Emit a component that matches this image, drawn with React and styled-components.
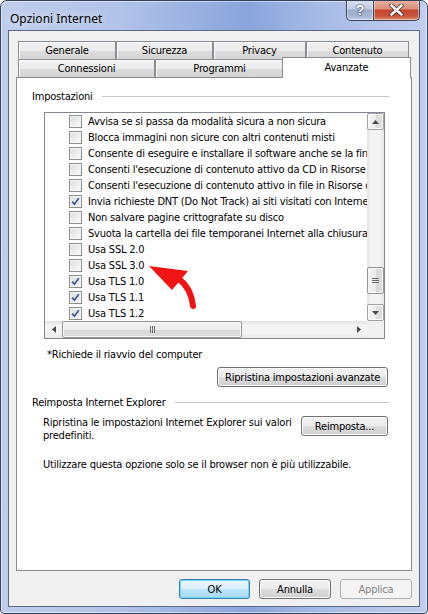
import React from 'react'
import styled, { createGlobalStyle } from 'styled-components'

const UI_FONT = `Tahoma, "DejaVu Sans Condensed", "Liberation Sans", sans-serif`

const GlobalStyle = createGlobalStyle`
  html, body {
    margin: 0;
    padding: 0;
    background: #fff;
  }
  body {
    font-family: ${UI_FONT};
    font-size: 11px;
    letter-spacing: -0.2px;
    color: #000;
  }
  * {
    box-sizing: border-box;
  }
`

const settings = [
  { label: 'Avvisa se si passa da modalità sicura a non sicura', checked: false },
  { label: 'Blocca immagini non sicure con altri contenuti misti', checked: false },
  { label: 'Consente di eseguire e installare il software anche se la firma non è valida', checked: false },
  { label: "Consenti l'esecuzione di contenuto attivo da CD in Risorse del computer*", checked: false },
  { label: "Consenti l'esecuzione di contenuto attivo in file in Risorse del computer*", checked: false },
  { label: 'Invia richieste DNT (Do Not Track) ai siti visitati con Internet Explorer', checked: true },
  { label: 'Non salvare pagine crittografate su disco', checked: false },
  { label: 'Svuota la cartella dei file temporanei Internet alla chiusura del browser', checked: false },
  { label: 'Usa SSL 2.0', checked: false },
  { label: 'Usa SSL 3.0', checked: false },
  { label: 'Usa TLS 1.0', checked: true },
  { label: 'Usa TLS 1.1', checked: true },
  { label: 'Usa TLS 1.2', checked: true },
]

const topTabs = [
  { label: 'Generale', width: 98 },
  { label: 'Sicurezza', width: 97 },
  { label: 'Privacy', width: 93 },
  { label: 'Contenuto', width: 103 },
]

const bottomTabs = [
  { label: 'Connessioni', width: 137 },
  { label: 'Programmi', width: 129 },
  { label: 'Avanzate', width: 129, selected: true },
]

const Arrow = ({ dir }) => {
  const shapes = {
    up: '0,4 7,4 3.5,0',
    down: '0,0 7,0 3.5,4',
    left: '4,0 4,7 0,3.5',
    right: '0,0 0,7 4,3.5',
  }
  const vertical = dir === 'up' || dir === 'down'
  return (
    <svg width={vertical ? 7 : 4} height={vertical ? 4 : 7}>
      <polygon points={shapes[dir]} fill="#4a4a4a" />
    </svg>
  )
}

const App = () => {
  const thumbTop = 137

  return (
    <>
      <GlobalStyle />
      <Window>
        <TitleBar>
          <Title>Opzioni Internet</Title>
          <CaptionGroup>
            <HelpButton>?</HelpButton>
            <CloseButton>
              <svg width="15" height="12" viewBox="0 0 15 12">
                <path d="M2.5 1.5 L12.5 10.5 M12.5 1.5 L2.5 10.5" stroke="#3a2a2a" strokeWidth="4.2" strokeLinecap="round" />
                <path d="M2.5 1.5 L12.5 10.5 M12.5 1.5 L2.5 10.5" stroke="#fff" strokeWidth="2.6" strokeLinecap="round" />
              </svg>
            </CloseButton>
          </CaptionGroup>
        </TitleBar>

        <Client>
          <TabRow>
            {topTabs.map((t) => (
              <Tab key={t.label} $width={t.width}>{t.label}</Tab>
            ))}
          </TabRow>
          <TabRow>
            {bottomTabs.map((t) =>
              t.selected ? (
                <SelectedTab key={t.label} $width={t.width}>{t.label}</SelectedTab>
              ) : (
                <Tab key={t.label} $width={t.width}>{t.label}</Tab>
              )
            )}
          </TabRow>

          <Panel>
            <GroupHeader>
              <span>Impostazioni</span>
              <GroupLine />
            </GroupHeader>

            <ListBox>
              <ListViewport>
                {settings.map((s) => (
                  <Item key={s.label}>
                    <Check>
                      {s.checked && (
                        <svg width="11" height="11" viewBox="0 0 11 11">
                          <path d="M2.2 5.6 L4.4 8.2 L8.8 2.2" fill="none" stroke="#3d5494" strokeWidth="1.7" />
                        </svg>
                      )}
                    </Check>
                    {s.label}
                  </Item>
                ))}
              </ListViewport>

              <VScroll>
                <ScrollButton $vertical><Arrow dir="up" /></ScrollButton>
                <VTrack>
                  <VThumb style={{ marginTop: thumbTop }}>
                    <svg width="7" height="7">
                      <path d="M0 1.5 H7 M0 3.5 H7 M0 5.5 H7" stroke="#6b6b6b" strokeWidth="1" />
                    </svg>
                  </VThumb>
                </VTrack>
                <ScrollButton $vertical><Arrow dir="down" /></ScrollButton>
              </VScroll>

              <HScroll>
                <GlyphButton><Arrow dir="left" /></GlyphButton>
                <HThumb>
                  <svg width="7" height="7">
                    <path d="M1.5 0 V7 M3.5 0 V7 M5.5 0 V7" stroke="#6b6b6b" strokeWidth="1" />
                  </svg>
                </HThumb>
                <HSpacer />
                <GlyphButton><Arrow dir="right" /></GlyphButton>
              </HScroll>
              <Corner />
            </ListBox>

            <Footnote>*Richiede il riavvio del computer</Footnote>

            <ActionRow>
              <Button $width={171}>Ripristina impostazioni avanzate</Button>
            </ActionRow>

            <GroupHeader $top={9}>
              <span>Reimposta Internet Explorer</span>
              <GroupLine />
            </GroupHeader>

            <ResetRow>
              <ResetText>
                Ripristina le impostazioni Internet Explorer sui valori
                <br />
                predefiniti.
              </ResetText>
              <Button $width={87}>Reimposta...</Button>
            </ResetRow>

            <Hint>Utilizzare questa opzione solo se il browser non è più utilizzabile.</Hint>
          </Panel>

          <DialogButtons>
            <Button $width={71} $default>OK</Button>
            <Button $width={72}>Annulla</Button>
            <Button $width={72} disabled>Applica</Button>
          </DialogButtons>
        </Client>

        <Pointer width="60" height="55" viewBox="0 0 60 55">
          <path d="M38 23 Q50 32 52 50" fill="none" stroke="#f01414" strokeWidth="6" strokeLinecap="round" />
          <polygon points="8,10 47,15 31,34" fill="#f01414" />
        </Pointer>
      </Window>
    </>
  )
}

const Window = styled.div`
  position: relative;
  width: 428px;
  height: 614px;
  display: flex;
  flex-direction: column;
  padding: 0 7px 6px 7px;
  border: 1px solid #34425e;
  border-radius: 7px 7px 4px 4px;
  background: linear-gradient(90deg, #bfcdec 0%, #b2c3e8 28%, #97aee0 48%, #8aa4dc 58%, #a9bce6 76%, #c0cdee 100%);
  box-shadow: inset 0 0 0 1px rgba(255, 255, 255, 0.5);
  overflow: hidden;
`

const TitleBar = styled.div`
  height: 29px;
  display: flex;
  justify-content: space-between;
  align-items: flex-start;
`

const Title = styled.div`
  font-family: "Noto Sans", "Liberation Sans", sans-serif;
  font-size: 12px;
  letter-spacing: 0;
  line-height: 15px;
  padding: 10px 0 0 2px;
  color: #000;
  text-shadow: 0 0 8px rgba(255, 255, 255, 0.9);
`

const CaptionGroup = styled.div`
  display: flex;
  margin-top: -1px;
`

const CaptionButton = styled.div`
  height: 21px;
  display: flex;
  align-items: center;
  justify-content: center;
  border: 1px solid #3a455c;
  border-top: none;
  box-shadow: inset 0 0 0 1px rgba(255, 255, 255, 0.45);
`

const HelpButton = styled(CaptionButton)`
  width: 27px;
  border-right: none;
  border-radius: 0 0 0 5px;
  background: linear-gradient(#dbe2f1 0%, #bfcbe3 45%, #9aabcc 50%, #a9b8d6 85%, #c6d2ea 100%);
  color: #fff;
  font-family: "Liberation Sans", sans-serif;
  font-weight: bold;
  font-size: 14px;
  text-shadow: 0 0 2px #2a3550, 0 0 1px #2a3550;
`

const CloseButton = styled(CaptionButton)`
  width: 47px;
  border-radius: 0 0 5px 0;
  background: linear-gradient(#eab3a4 0%, #dc8d77 45%, #c5442b 50%, #c9553a 80%, #e08a6e 100%);
`

const Client = styled.div`
  flex: 1;
  display: flex;
  flex-direction: column;
  border: 1px solid #5d6a84;
  background: #f0f0f0;
  padding: 10px 7px 0 7px;
`

const TabRow = styled.div`
  display: flex;
  align-items: flex-end;
  height: 18px;
  margin: 0 2px;
`

const Tab = styled.div`
  width: ${(p) => p.$width}px;
  height: 18px;
  display: flex;
  align-items: center;
  justify-content: center;
  border: 1px solid #898c95;
  border-bottom: none;
  background: linear-gradient(#f2f2f2 0%, #ebebeb 50%, #dddddd 51%, #d4d4d4 100%);
  box-shadow: inset 1px 1px 0 #fcfcfc;
  line-height: 13px;
`

const SelectedTab = styled(Tab)`
  position: relative;
  z-index: 1;
  height: 21px;
  margin: 0 -2px -1px -2px;
  align-items: flex-start;
  padding-top: 3px;
  background: #fff;
  box-shadow: none;
`

const Panel = styled.div`
  flex: 1;
  display: flex;
  flex-direction: column;
  border: 1px solid #898c95;
  background: #fff;
`

const GroupHeader = styled.div`
  display: flex;
  align-items: center;
  margin: ${(p) => p.$top ?? 12}px 22px 0 15px;
  line-height: 13px;
`

const GroupLine = styled.div`
  flex: 1;
  height: 1px;
  margin-left: 9px;
  background: #c2c6cc;
`

const ListBox = styled.div`
  width: 341px;
  height: 227px;
  margin: 9px 0 0 27px;
  border: 1px solid #828790;
  display: grid;
  grid-template-columns: 1fr 17px;
  grid-template-rows: 1fr 17px;
`

const ListViewport = styled.div`
  overflow: hidden;
  padding-left: 24px;
`

const Item = styled.div`
  display: flex;
  align-items: center;
  height: 16px;
  white-space: nowrap;
`

const Check = styled.div`
  flex: none;
  width: 13px;
  height: 13px;
  margin-right: 6px;
  display: flex;
  align-items: center;
  justify-content: center;
  border: 1px solid #8e8f8f;
  background: linear-gradient(135deg, #d9dbde 0%, #eeeeee 60%, #fbfbfb 100%);
  box-shadow: inset 0 0 0 1px #f4f4f4;
`

const VScroll = styled.div`
  display: flex;
  flex-direction: column;
  background: linear-gradient(90deg, #e3e3e3 0%, #f3f3f3 25%, #f3f3f3 75%, #e8e8e8 100%);
`

const ScrollButton = styled.div`
  height: 17px;
  display: flex;
  align-items: center;
  justify-content: center;
  border: 1px solid #a2a2a2;
  border-radius: 2px;
  background: linear-gradient(${(p) => (p.$vertical ? '90deg' : '180deg')}, #f6f6f6 0%, #ececec 50%, #dcdcdc 51%, #dedede 100%);
  box-shadow: inset 0 0 0 1px #fbfbfb;
`

const VTrack = styled.div`
  flex: 1;
  display: flex;
  flex-direction: column;
`

const VThumb = styled.div`
  height: 27px;
  display: flex;
  align-items: center;
  justify-content: center;
  border: 1px solid #959595;
  border-radius: 2px;
  background: linear-gradient(90deg, #f4f4f4 0%, #ebebeb 50%, #d9d9d9 51%, #dcdcdc 100%);
  box-shadow: inset 0 0 0 1px #fafafa;
`

const HScroll = styled.div`
  display: flex;
  background: linear-gradient(#e3e3e3 0%, #f3f3f3 25%, #f3f3f3 75%, #e8e8e8 100%);
`

const GlyphButton = styled.div`
  width: 17px;
  display: flex;
  align-items: center;
  justify-content: center;
`

const HThumb = styled.div`
  width: 180px;
  display: flex;
  align-items: center;
  justify-content: center;
  border: 1px solid #959595;
  border-radius: 2px;
  background: linear-gradient(#f4f4f4 0%, #ebebeb 50%, #d9d9d9 51%, #dcdcdc 100%);
  box-shadow: inset 0 0 0 1px #fafafa;
`

const HSpacer = styled.div`
  flex: 1;
`

const Corner = styled.div`
  background: #f0f0f0;
`

const Footnote = styled.div`
  margin: 9px 0 0 30px;
  line-height: 13px;
`

const ActionRow = styled.div`
  display: flex;
  justify-content: flex-end;
  margin-top: 6px;
  padding-right: 23px;
`

const Button = styled.button`
  width: ${(p) => p.$width}px;
  height: 20px;
  padding: 0;
  font-family: ${UI_FONT};
  font-size: 11px;
  letter-spacing: -0.2px;
  color: #000;
  border: 1px solid ${(p) => (p.$default ? '#3c7fb1' : '#707070')};
  border-radius: 3px;
  background: ${(p) =>
    p.$default
      ? 'linear-gradient(#eaf6fd 0%, #d9f0fc 50%, #bee6fd 51%, #a7d9f5 100%)'
      : 'linear-gradient(#f2f2f2 0%, #ebebeb 50%, #dddddd 51%, #cfcfcf 100%)'};
  box-shadow: inset 0 0 0 1px ${(p) => (p.$default ? '#6fd8f6' : '#fcfcfc')};

  &:disabled {
    color: #838383;
    border-color: #adb2b5;
    background: #f4f4f4;
    box-shadow: none;
  }
`

const ResetRow = styled.div`
  display: flex;
  align-items: flex-start;
  margin: 7px 0 0 26px;
  padding-right: 23px;
`

const ResetText = styled.div`
  flex: 1;
  line-height: 13px;
  white-space: nowrap;
`

const Hint = styled.div`
  margin: 16px 0 0 26px;
  line-height: 13px;
`

const DialogButtons = styled.div`
  display: flex;
  justify-content: flex-end;
  gap: 9px;
  padding: 8px 0 7px;
`

const Pointer = styled.svg`
  position: absolute;
  left: 140px;
  top: 255px;
`

export default App
